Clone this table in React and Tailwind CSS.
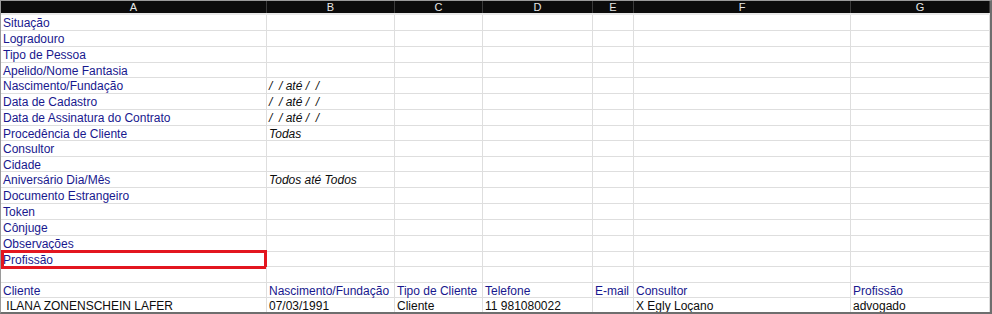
import React from "react";

const widths = ["w-[266px]", "w-[128px]", "w-[88px]", "w-[110px]", "w-[41px]", "w-[217px]", "flex-1"];
const letters = ["A", "B", "C", "D", "E", "F", "G"];

const filterRows = [
  ["Situação", "", 16],
  ["Logradouro", "", 16],
  ["Tipo de Pessoa", "", 16],
  ["Apelido/Nome Fantasia", "", 15],
  ["Nascimento/Fundação", "/  / até /  /", 16],
  ["Data de Cadastro", "/  / até /  /", 16],
  ["Data de Assinatura do Contrato", "/  / até /  /", 16],
  ["Procedência de Cliente", "Todas", 15],
  ["Consultor", "", 16],
  ["Cidade", "", 15],
  ["Aniversário Dia/Mês", "Todos até Todos", 16],
  ["Documento Estrangeiro", "", 16],
  ["Token", "", 16],
  ["Cônjuge", "", 16],
  ["Observações", "", 16],
];

function Cell({ i, children, className = "" }) {
  return (
    <div
      className={`${widths[i]} shrink-0 border-r border-[#dedede] flex items-center overflow-visible whitespace-pre pl-[2px] pt-[1px] ${className}`}
    >
      {children}
    </div>
  );
}

function Row({ h, cells, extra }) {
  const hc = h === 16 ? "h-[16px]" : h === 15 ? "h-[15px]" : "h-[14px]";
  return (
    <div className={`flex ${hc} border-b border-[#dedede] relative`}>
      {letters.map((_, i) => (
        <Cell key={i} i={i}>
          {cells[i] || null}
        </Cell>
      ))}
      {extra}
    </div>
  );
}

const Blue = ({ children }) => <span className="text-[#18188e]">{children}</span>;
const Ital = ({ children }) => <span className="italic text-[#0d0d0d]">{children}</span>;
const Blk = ({ children }) => <span className="text-[#0d0d0d]">{children}</span>;

export default function App() {
  return (
    <div
      className="w-[992px] h-[314px] bg-white border-t border-l border-[#9a9a9a] border-r-2 border-r-[#6e6e6e] border-b-2 border-b-[#6e6e6e] overflow-hidden text-[12px] leading-none"
      style={{ fontFamily: '"Liberation Sans", Arial, sans-serif' }}
    >
      <div className="flex h-[12px] bg-[#0b0b0b]">
        {letters.map((l, i) => (
          <div
            key={l}
            className={`${widths[i]} shrink-0 border-r border-[#3a3a3a] flex items-center justify-center text-[11px] text-[#e6e6e6] leading-none`}
          >
            {l}
          </div>
        ))}
      </div>
      <div className="h-[2px] bg-[#e8e8e8]" />
      {filterRows.map(([label, val, h], idx) => (
        <Row
          key={idx}
          h={h}
          cells={[<Blue>{label}</Blue>, val ? <Ital>{val}</Ital> : null]}
        />
      ))}
      <Row
        h={15}
        cells={[<Blue>Profissão</Blue>]}
        extra={
          <div className="absolute left-0 top-[-2px] w-[266px] h-[19px] border-[3px] border-[#e3161f] pointer-events-none" />
        }
      />
      <Row h={16} cells={[]} />
      <Row
        h={15}
        cells={[
          <Blue>Cliente</Blue>,
          <Blue>Nascimento/Fundação</Blue>,
          <Blue>Tipo de Cliente</Blue>,
          <Blue>Telefone</Blue>,
          <Blue>E-mail</Blue>,
          <Blue>Consultor</Blue>,
          <Blue>Profissão</Blue>,
        ]}
      />
      <Row
        h={15}
        cells={[
          <Blk> ILANA ZONENSCHEIN LAFER</Blk>,
          <Blk>07/03/1991</Blk>,
          <Blk>Cliente</Blk>,
          <Blk>11 981080022</Blk>,
          null,
          <Blk>X Egly Loçano</Blk>,
          <Blk>advogado</Blk>,
        ]}
      />
    </div>
  );
}
